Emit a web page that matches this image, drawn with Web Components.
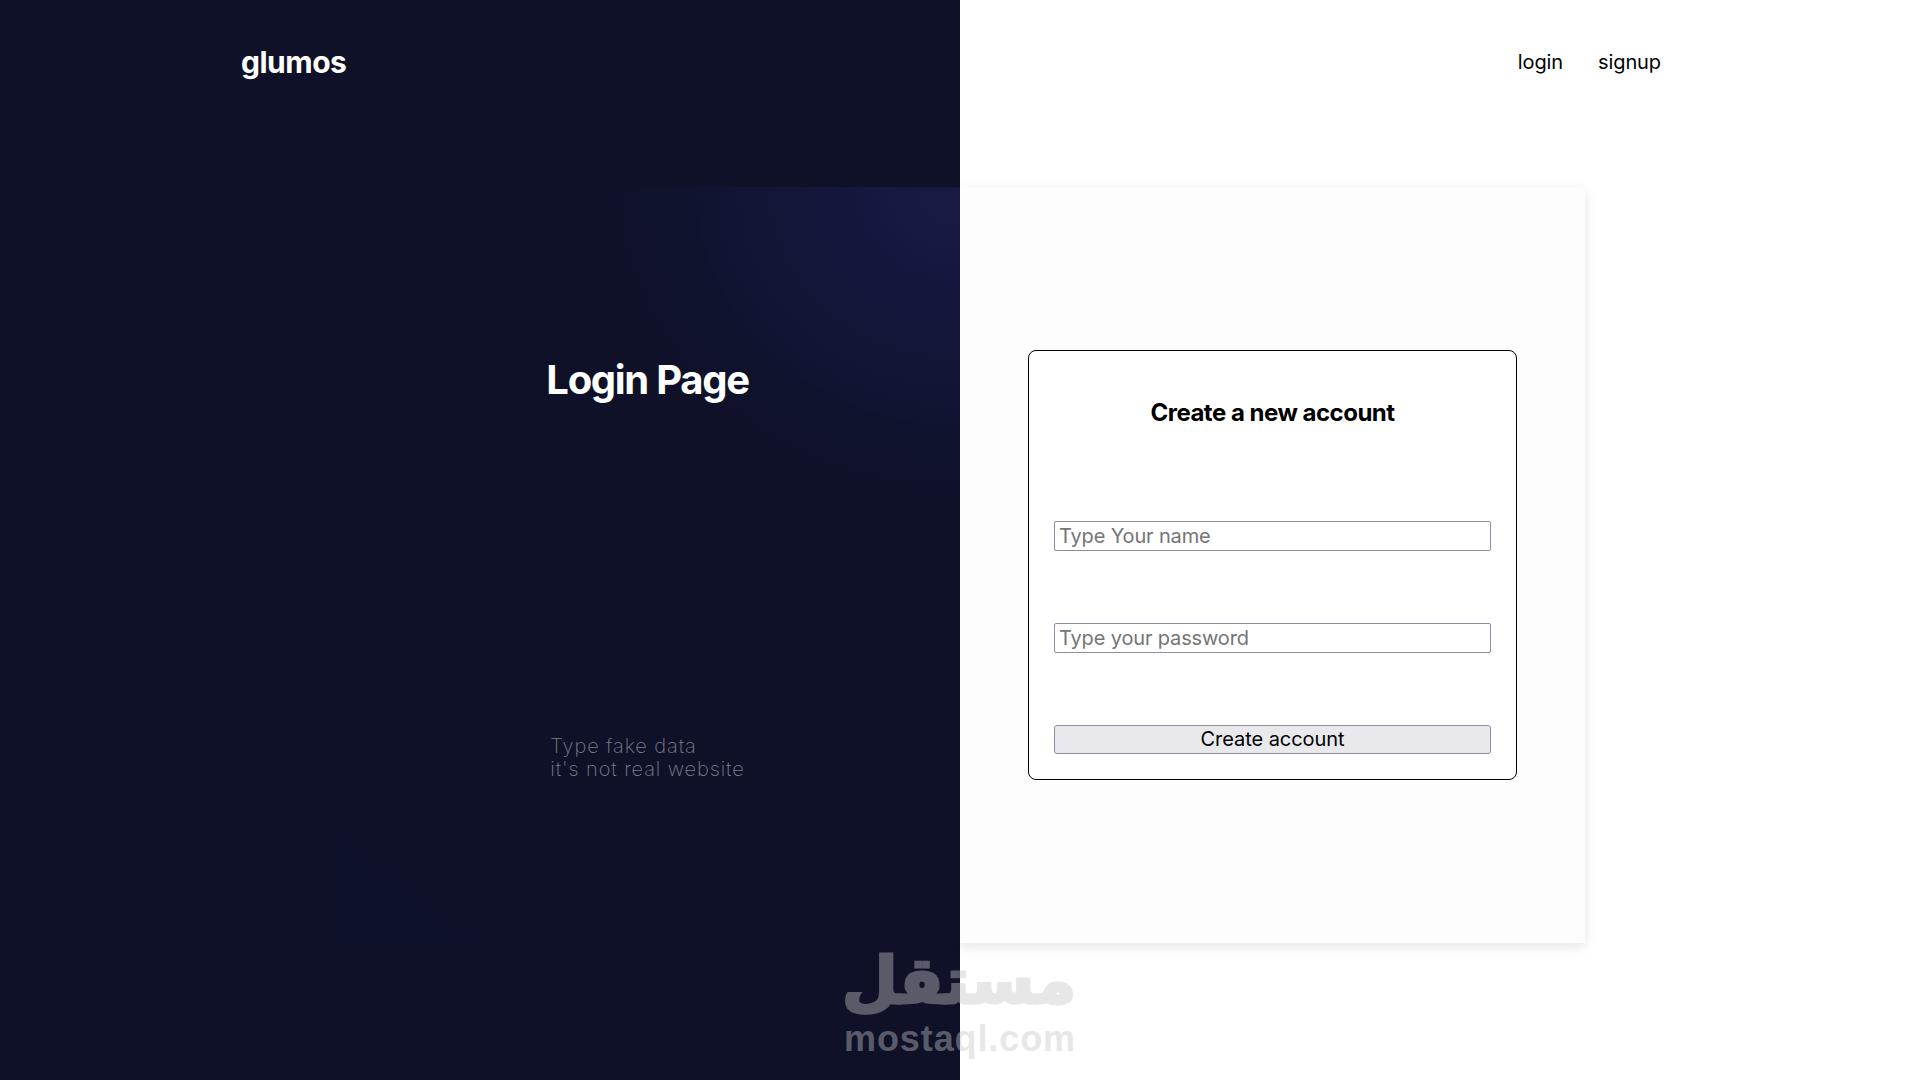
<!DOCTYPE html>
<html lang="en">
<head>
<meta charset="utf-8">
<title>glumos</title>
<style>
    html, body { margin: 0; height: 100%; }
    body { font-family: Inter, "Liberation Sans", sans-serif; overflow: hidden; }
</style>
</head>
<body>
<auth-page>
    <site-header></site-header>
    <auth-card>
        <intro-panel slot="intro">
            <span slot="title">Login Page</span>
            <span slot="note">Type fake data<br>it's not real website</span>
        </intro-panel>
        <signup-form slot="form"></signup-form>
    </auth-card>
</auth-page>
<mostaql-mark></mostaql-mark>

<script>
    (function() {
        // small helper, every element just sets its markup in an open shadow root
        class Base extends HTMLElement {
            constructor(html) {
                super();
                this.attachShadow({ mode: 'open' }).innerHTML = html;
            }
        }

        class AuthPage extends Base {
            constructor() {
                super(`
    <style>
        :host {
            display: flex;
            flex-direction: column;
            align-items: center;
            height: 1080px;
            background: linear-gradient(90deg, #0e1128 50%, #fff 50%);
        }
    </style>
    <slot></slot>`);
            }
        }

        class SiteHeader extends Base {
            constructor() {
                super(`
    <style>
        :host {
            display: flex;
            justify-content: space-between;
            align-items: center;
            box-sizing: border-box;
            width: 1440px;
            height: 125px;
            padding: 0 19px 1px 1px;
        }
        .logo { color: #fff; font-size: 30px; font-weight: 700; letter-spacing: -.5px; }
        nav { display: flex; gap: 35px; }
        a { color: #000; font-size: 20px; letter-spacing: -.1px; text-decoration: none; }
    </style>
    <div class="logo">glumos</div>
    <nav><a href="#">login</a><a href="#">signup</a></nav>`);
            }
        }

        class AuthCard extends Base {
            constructor() {
                super(`
    <style>
        :host {
            display: grid;
            grid-template-columns: 625px 625px;
            height: 756px;
            margin-top: 62px;
        }
    </style>
    <slot name="intro"></slot>
    <slot name="form"></slot>`);
            }
        }

        class IntroPanel extends Base {
            constructor() {
                super(`
    <style>
        :host {
            position: relative;
            z-index: 1;
            display: flex;
            flex-direction: column;
            align-items: center;
            height: 756px;
            color: #fff;
            background:
                radial-gradient(ellipse 265px 240px at 625px 0, #181b45 0%, #14173c 45%, rgba(17, 21, 50, .5) 99%, rgba(17, 21, 50, 0) 100%),
                radial-gradient(ellipse 370px 325px at 625px 0, #10133a 0%, rgba(16, 19, 46, .75) 75%, rgba(16, 19, 46, 0) 100%),
                linear-gradient(38deg, #0e112c 0, #0e112c 60px, rgba(14, 17, 44, 0) 105px) 0 100% / 180px 115px no-repeat,
                #0e1128;
        }
        h1 {
            margin: 170px 0 0;
            font-size: 40px;
            line-height: 46px;
            font-weight: 700;
            letter-spacing: -1.3px;
        }
        p {
            margin: 332px 0 0;
            color: #7b7d8c;
            font-size: 20px;
            font-weight: 200;
            line-height: 23px;
            letter-spacing: .9px;
        }
    </style>
    <h1><slot name="title"></slot></h1>
    <p><slot name="note"></slot></p>`);
            }
        }

        class FormField extends Base {
            constructor() {
                super(`
    <style>
        :host { display: block; }
        input {
            display: block;
            box-sizing: border-box;
            width: 100%;
            height: 30px;
            padding: 1px 4px;
            border: 1px solid #8f8d9c;
            border-radius: 2px;
            background: #fff;
            font: 20px Inter, "Liberation Sans", sans-serif;
            letter-spacing: -.15px;
        }
    </style>
    <input>`);
                this.shadowRoot.querySelector("input").placeholder = this.getAttribute("placeholder");
            }
        }

        class SignupForm extends Base {
            constructor() {
                super(`
    <style>
        :host {
            display: flex;
            align-items: flex-start;
            justify-content: center;
            padding-top: 163px;
            background: #fdfdfd;
            box-shadow: 0 4px 12px rgba(0, 0, 0, .1);
        }
        .box {
            box-sizing: border-box;
            width: 489px;
            height: 430px;
            padding: 0 25px;
            border: 1px solid #000;
            border-radius: 8px;
            background: #fff;
        }
        h2 {
            margin: 47px 0 0;
            height: 30px;
            color: #000;
            font-size: 24px;
            line-height: 30px;
            font-weight: 700;
            letter-spacing: -.5px;
            text-align: center;
        }
        .field-one { margin-top: 93px; }
        .field-two { margin-top: 72px; }
        button {
            display: block;
            box-sizing: border-box;
            width: 100%;
            height: 29px;
            margin-top: 72px;
            padding: 0 0 2px;
            border: 1px solid #8f8d9c;
            border-radius: 3px;
            background: #e9e9ed;
            color: #000;
            font: 20px Inter, "Liberation Sans", sans-serif;
            letter-spacing: -.05px;
        }
    </style>
    <div class="box">
        <h2>Create a new account</h2>
        <form-field class="field-one" placeholder="Type Your name"></form-field>
        <form-field class="field-two" placeholder="Type your password"></form-field>
        <button type="button">Create account</button>
    </div>`);
            }
        }

        // the watermark sits over the whole shot
        class MostaqlMark extends Base {
            constructor() {
                super(`
    <style>
        :host {
            position: absolute;
            z-index: 2;
            left: 844px;
            top: 942px;
            width: 232px;
            color: #c6c6c6;
            opacity: .41;
            text-align: center;
            pointer-events: none;
        }
        .ar {
            font: bold 64px/78px "DejaVu Sans", sans-serif;
            -webkit-text-stroke: 3px #c6c6c6;
            white-space: nowrap;
        }
        .en {
            font: bold 36px/38px "Liberation Sans", sans-serif;
            letter-spacing: .9px;
            white-space: nowrap;
        }
    </style>
    <div class="ar" lang="ar" dir="rtl">مستقل</div>
    <div class="en">mostaql.com</div>`);
            }
        }

        customElements.define("auth-page", AuthPage);
        customElements.define("site-header", SiteHeader);
        customElements.define("auth-card", AuthCard);
        customElements.define("intro-panel", IntroPanel);
        customElements.define("form-field", FormField);
        customElements.define("signup-form", SignupForm);
        customElements.define("mostaql-mark", MostaqlMark);
    })()
</script>
</body>
</html>
